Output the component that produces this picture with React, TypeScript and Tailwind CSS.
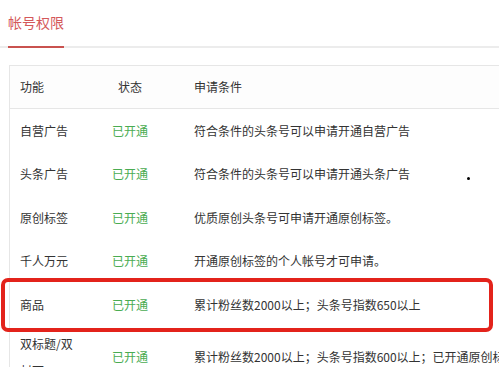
import React from 'react';

interface PermRow {
  name: string;
  status: string;
  condition: string;
}

const rows: PermRow[] = [
  { name: '自营广告', status: '已开通', condition: '符合条件的头条号可以申请开通自营广告' },
  { name: '头条广告', status: '已开通', condition: '符合条件的头条号可以申请开通头条广告' },
  { name: '原创标签', status: '已开通', condition: '优质原创头条号可申请开通原创标签。' },
  { name: '千人万元', status: '已开通', condition: '开通原创标签的个人帐号才可申请。' },
  { name: '商品', status: '已开通', condition: '累计粉丝数2000以上；头条号指数650以上' },
  {
    name: '双标题/双封面',
    status: '已开通',
    condition: '累计粉丝数2000以上；头条号指数600以上；已开通原创标签的帐号可申请',
  },
];

const Row: React.FC<{ row: PermRow; tall?: boolean }> = ({ row, tall }) => (
  <div className={`flex items-center ${tall ? 'py-[3px]' : 'h-[43.5px]'}`}>
    <div className={`w-[80px] shrink-0 pl-[10px] pr-[10px] ${tall ? 'leading-[27px]' : ''}`}>{row.name}</div>
    <div className="w-[80px] shrink-0 text-center text-[#4aac52]">{row.status}</div>
    <div className="pl-[24px] whitespace-nowrap">{row.condition}</div>
  </div>
);

export default function App() {
  return (
    <div
      className="relative w-[499px] h-[367px] overflow-hidden bg-white text-[12px] text-[#333]"
      style={{ fontFamily: '"Noto Sans CJK SC", "Noto Sans", sans-serif' }}
    >
      {/* tab bar */}
      <div className="flex h-[48px] border-b-2 border-[#ececec] px-[8px]">
        <div className="-mb-[2px] border-b-2 border-[#c9524f] pt-[12px] text-[14px] leading-[20px] text-[#d4585a]">
          帐号权限
        </div>
      </div>

      {/* permissions table */}
      <div className="ml-[9px] mt-[17px] w-[720px] border border-[#e6e6e6] leading-[18px]">
        <div className="flex h-[43px] items-center border-b border-[#e6e6e6] bg-[#fdfdfd]">
          <div className="w-[80px] shrink-0 pl-[10px]">功能</div>
          <div className="w-[80px] shrink-0 text-center">状态</div>
          <div className="pl-[24px]">申请条件</div>
        </div>
        {rows.map((r, i) => (
          <Row key={r.name} row={r} tall={i === rows.length - 1} />
        ))}
      </div>

      {/* highlight marker */}
      <div className="absolute left-[1px] top-[278px] h-[54px] w-[492px] rounded-[7px] border-[4px] border-[#e3231b]" />
      <div className="absolute left-[467px] top-[177px] h-[3px] w-[3px] rounded-full bg-black" />
    </div>
  );
}
